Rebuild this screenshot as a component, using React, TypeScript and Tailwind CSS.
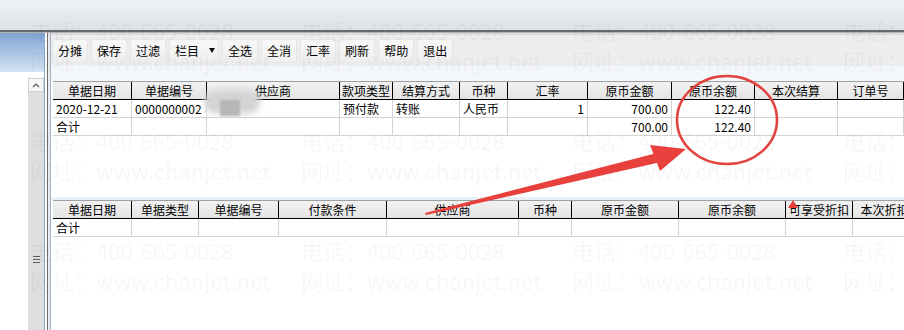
import React from 'react';

const font = "font-['SimSun','Noto_Sans_CJK_SC',sans-serif]";

const tools = ['分摊', '保存', '过滤', '栏目', '全选', '全消', '汇率', '刷新', '帮助', '退出'];

const top1 = ['单据日期', '单据编号', '供应商', '款项类型', '结算方式', '币种', '汇率', '原币金额', '原币余额', '本次结算', '订单号'];
const rows1 = [
  ['2020-12-21', '0000000002', '', '预付款', '转账', '人民币', '1', '700.00', '122.40', '', ''],
  ['合计', '', '', '', '', '', '', '700.00', '122.40', '', ''],
];
const right1 = [6, 7, 8];

const top2 = ['单据日期', '单据类型', '单据编号', '付款条件', '供应商', '币种', '原币金额', '原币余额', '可享受折扣', '本次折扣'];
const rows2 = [['合计', '', '', '', '', '', '', '', '', '']];

function Grid({ cols, heads, rows, right }: { cols: string; heads: string[]; rows: string[][]; right: number[] }) {
  return (
    <div className="overflow-hidden">
      <div className={`grid ${cols} border-t border-[#a0a0a0] border-b border-b-black`}>
        {heads.map((h, i) => (
          <div key={i} className="h-[17px] bg-gradient-to-b from-[#f2f2f2] to-[#e4e4e4] border-r border-black text-center leading-[17px] whitespace-nowrap overflow-hidden">
            {h}
          </div>
        ))}
      </div>
      {rows.map((r, ri) => (
        <div key={ri} className={`grid ${cols}`}>
          {r.map((c, ci) => (
            <div
              key={ci}
              className={`h-[18px] border-r border-b border-[#d4d4d4] px-[3px] leading-[17px] whitespace-nowrap overflow-hidden ${right.includes(ci) ? 'text-right' : ''}`}
            >
              {c}
            </div>
          ))}
        </div>
      ))}
    </div>
  );
}

export default function App() {
  return (
    <div className={`relative w-[904px] h-[330px] overflow-hidden bg-white text-[12px] text-black ${font}`}>
      {/* title strip */}
      <div className="h-[30px] bg-gradient-to-b from-[#eef1f4] to-[#dde2e7]" />
      <div className="h-[2px] bg-[#6a6a6a]" />
      <div className="h-px bg-[#b4b4b4]" />

      <div className="flex h-[297px]">
        {/* left pane */}
        <div className="w-[44px] flex flex-col">
          <div className="h-[39px] bg-gradient-to-b from-[#7fa3d3] to-[#d6e4f4]" />
          <div className="flex flex-1">
            <div className="w-[28px] bg-white" />
            <div className="w-[16px] mt-[6px] bg-[#dedede] flex flex-col items-center">
              <div className="w-[16px] h-[14px] bg-[#f6f6f6] border border-[#cfcfcf] flex items-center justify-center">
                <svg width="8" height="5" viewBox="0 0 8 5">
                  <path d="M1 4 L4 1 L7 4" fill="none" stroke="#555" strokeWidth="1.2" />
                </svg>
              </div>
              <div className="mt-[164px] flex flex-col gap-[2px]">
                <div className="w-[7px] h-px bg-[#606060]" />
                <div className="w-[7px] h-px bg-[#606060]" />
                <div className="w-[7px] h-px bg-[#606060]" />
              </div>
            </div>
          </div>
        </div>

        {/* splitter */}
        <div className="flex">
          <div className="w-px bg-[#8aa5c8]" />
          <div className="w-[2px] bg-white" />
          <div className="w-px bg-[#6b6b6b]" />
          <div className="w-[2px] bg-[#ececec]" />
        </div>

        {/* main panel */}
        <div className="flex-1 flex flex-col border-l border-[#9fb3cc] min-w-0">
          <div className="h-[2px] bg-[#dcdcdc]" />
          <div className="h-[31px] bg-[#ededed] flex items-center gap-[3px] pl-[1px]">
            {tools.map((t) => (
              <div
                key={t}
                className={`h-[24px] pl-[5px] flex items-center gap-[10px] rounded-[2px] border border-[#e6e6e6] bg-gradient-to-b from-[#f7f7f7] to-[#efefef] ${t === '栏目' ? 'pr-[3px]' : 'pr-[5px]'}`}
              >
                <span>{t}</span>
                {t === '栏目' && (
                  <svg width="6" height="5" viewBox="0 0 6 5">
                    <path d="M0 0 L6 0 L3 5 Z" fill="#111" />
                  </svg>
                )}
              </div>
            ))}
          </div>
          <div className="h-[15px] bg-[#f3f7fb]" />

          <div className="h-[116px] bg-white pl-[2px]">
            <Grid
              cols="grid-cols-[79px_75px_133px_53px_67px_48px_80px_84px_83px_83px_66px]"
              heads={top1}
              rows={rows1}
              right={right1}
            />
          </div>
          <div className="h-[3px] bg-[#e8f0f8]" />
          <div className="flex-1 bg-white pl-[2px]">
            <Grid
              cols="grid-cols-[79px_67px_80px_108px_132px_53px_107px_107px_67px_64px]"
              heads={top2}
              rows={rows2}
              right={[]}
            />
          </div>
        </div>
      </div>

      {/* blurred supplier name */}
      <div className="absolute left-[204px] top-[90px] w-[56px] h-[24px] rounded-full bg-[#d4d4d4] blur-[3px]" />
      <div className="absolute left-[220px] top-[100px] w-[20px] h-[16px] bg-[#b6b6b6] blur-[1px]" />

      {/* watermark */}
      <div className="absolute left-[30px] top-[15px] grid grid-cols-[repeat(4,271px)] auto-rows-[110px] pointer-events-none font-['Noto_Sans_CJK_SC',sans-serif] text-[22px] leading-[30px] text-[rgba(0,0,0,0.05)]">
        {Array.from({ length: 12 }).map((_, i) => (
          <div key={i} className="whitespace-nowrap">
            <div>电话：400-665-0028</div>
            <div>网址：www.chanjet.net</div>
          </div>
        ))}
      </div>

      {/* red annotations */}
      <svg className="absolute inset-0 pointer-events-none" width="904" height="330" viewBox="0 0 904 330">
        <ellipse cx="727" cy="120" rx="50" ry="44" fill="none" stroke="#e3433f" strokeWidth="2.6" />
        <polygon points="425,213 655,153.5 659,162.5 426,215" fill="#e8403c" />
        <polygon points="686,149 650,145 660,171" fill="#e8403c" />
        <polygon points="793,200 788,208 798,208" fill="#e8403c" />
      </svg>
    </div>
  );
}
